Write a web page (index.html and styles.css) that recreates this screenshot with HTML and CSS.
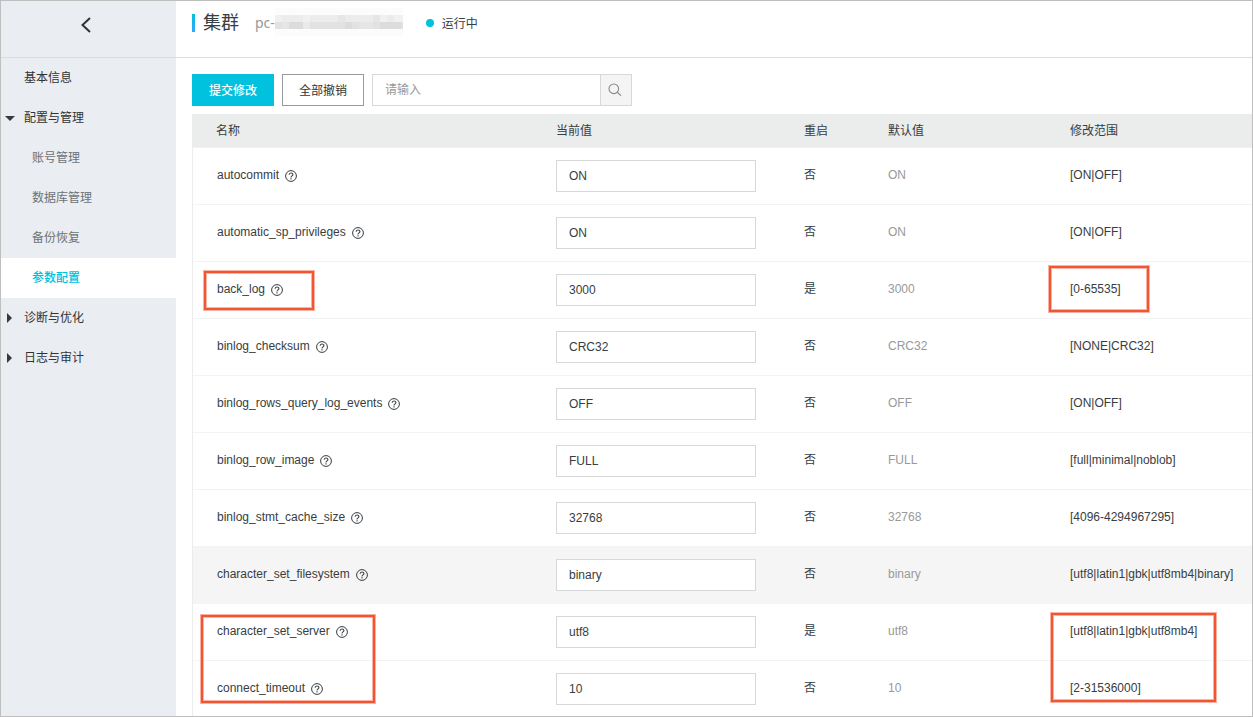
FILE: index.html
```html
<!DOCTYPE html>
<html lang="zh-CN">
<head>
<meta charset="utf-8">
<title>集群 - 参数配置</title>
<link rel="stylesheet" href="styles.css">
</head>
<body>
<svg class="defs" width="0" height="0" aria-hidden="true">
  <symbol id="help" viewBox="0 0 12 12"><circle cx="6" cy="6" r="5.4" fill="none" stroke="currentColor"/><path d="M4.1 4.8C4.1 2.4 7.9 2.4 7.9 4.6C7.9 5.9 6 5.9 6 7.4M6 8.2V9.4" fill="none" stroke="currentColor" stroke-width="1.1"/></symbol>
</svg>
<div class="app">
  <nav class="sidebar">
    <div class="sidebar-head">
      <button class="back" type="button" aria-label="返回"><svg width="12" height="18" viewBox="0 0 12 18"><path d="M10 2L2.5 9L10 16" fill="none" stroke="currentColor" stroke-width="2"/></svg></button>
    </div>
    <a class="item" href="#">基本信息</a>
    <a class="item" href="#"><svg class="arrow" width="10" height="10" viewBox="0 0 10 10"><path d="M0 3H10L5 8Z"/></svg>配置与管理</a>
    <a class="item sub" href="#">账号管理</a>
    <a class="item sub" href="#">数据库管理</a>
    <a class="item sub" href="#">备份恢复</a>
    <a class="item sub active" href="#">参数配置</a>
    <a class="item" href="#"><svg class="arrow" width="10" height="10" viewBox="0 0 10 10"><path d="M2 0L7 5L2 10Z"/></svg>诊断与优化</a>
    <a class="item" href="#"><svg class="arrow" width="10" height="10" viewBox="0 0 10 10"><path d="M2 0L7 5L2 10Z"/></svg>日志与审计</a>
  </nav>
  <main class="main">
    <header class="header">
      <h1 class="title">集群</h1>
      <span class="cluster-id">pc-</span>
      <svg class="mask" width="128" height="28" viewBox="0 0 128 28" shape-rendering="crispEdges" aria-hidden="true">
        <rect width="128" height="28" fill="#fcfcfc"/>
        <rect y="7" width="128" height="7" fill="#ececec"/>
        <rect y="14" width="128" height="7" fill="#e2e2e2"/>
        <g fill="#dcdcdc"><rect x="14" y="14" width="14" height="7"/><rect x="70" y="14" width="7" height="7"/><rect x="105" y="14" width="21" height="7"/></g>
        <g fill="#e6e6e6"><rect x="7" y="14" width="7" height="7"/><rect x="84" y="14" width="14" height="7"/><rect x="63" y="7" width="7" height="7"/><rect x="98" y="7" width="7" height="7"/></g>
        <g fill="#f1f1f1"><rect x="0" y="7" width="7" height="7"/><rect x="28" y="7" width="7" height="7"/><rect x="105" y="7" width="7" height="7"/><rect x="119" y="7" width="9" height="7"/></g>
        <rect x="28" y="14" width="7" height="7" fill="#eaeaea"/>
      </svg>
      <span class="status">运行中</span>
    </header>
    <section class="content">
      <div class="toolbar">
        <button class="btn primary" type="button">提交修改</button>
        <button class="btn" type="button">全部撤销</button>
        <form class="search">
          <input class="search-input" type="text" placeholder="请输入" aria-label="搜索参数">
          <button class="search-btn" type="button" aria-label="搜索"><svg width="14" height="14" viewBox="0 0 14 14"><circle cx="5.8" cy="5.8" r="4.8" fill="none" stroke="currentColor" stroke-width="1.1"/><path d="M9.3 9.3L13 12.6" fill="none" stroke="currentColor" stroke-width="1.2"/></svg></button>
        </form>
      </div>
      <table class="params">
        <colgroup><col class="c-name"><col class="c-value"><col class="c-restart"><col class="c-default"><col></colgroup>
        <thead><tr><th>名称</th><th>当前值</th><th>重启</th><th>默认值</th><th>修改范围</th></tr></thead>
        <tbody>
          <tr><td><label for="p1">autocommit</label><svg class="help"><use href="#help"/></svg></td><td><input id="p1" type="text" value="ON"></td><td>否</td><td>ON</td><td>[ON|OFF]</td></tr>
          <tr><td><label for="p2">automatic_sp_privileges</label><svg class="help"><use href="#help"/></svg></td><td><input id="p2" type="text" value="ON"></td><td>否</td><td>ON</td><td>[ON|OFF]</td></tr>
          <tr><td><label for="p3">back_log</label><svg class="help"><use href="#help"/></svg><span class="mark mark-name"></span></td><td><input id="p3" type="text" value="3000"></td><td>是</td><td>3000</td><td>[0-65535]<span class="mark mark-range"></span></td></tr>
          <tr><td><label for="p4">binlog_checksum</label><svg class="help"><use href="#help"/></svg></td><td><input id="p4" type="text" value="CRC32"></td><td>否</td><td>CRC32</td><td>[NONE|CRC32]</td></tr>
          <tr><td><label for="p5">binlog_rows_query_log_events</label><svg class="help"><use href="#help"/></svg></td><td><input id="p5" type="text" value="OFF"></td><td>否</td><td>OFF</td><td>[ON|OFF]</td></tr>
          <tr><td><label for="p6">binlog_row_image</label><svg class="help"><use href="#help"/></svg></td><td><input id="p6" type="text" value="FULL"></td><td>否</td><td>FULL</td><td>[full|minimal|noblob]</td></tr>
          <tr><td><label for="p7">binlog_stmt_cache_size</label><svg class="help"><use href="#help"/></svg></td><td><input id="p7" type="text" value="32768"></td><td>否</td><td>32768</td><td>[4096-4294967295]</td></tr>
          <tr class="hovered"><td><label for="p8">character_set_filesystem</label><svg class="help"><use href="#help"/></svg></td><td><input id="p8" type="text" value="binary"></td><td>否</td><td>binary</td><td>[utf8|latin1|gbk|utf8mb4|binary]</td></tr>
          <tr><td><label for="p9">character_set_server</label><svg class="help"><use href="#help"/></svg><span class="mark mark-names"></span></td><td><input id="p9" type="text" value="utf8"></td><td>是</td><td>utf8</td><td>[utf8|latin1|gbk|utf8mb4]<span class="mark mark-ranges"></span></td></tr>
          <tr><td><label for="p10">connect_timeout</label><svg class="help"><use href="#help"/></svg></td><td><input id="p10" type="text" value="10"></td><td>否</td><td>10</td><td>[2-31536000]</td></tr>
        </tbody>
      </table>
    </section>
  </main>
</div>
</body>
</html>
```

FILE: styles.css
```css
* { box-sizing: border-box; }
body, button, input {
  font-family: "Liberation Sans", "Noto Sans CJK SC", sans-serif;
  font-size: 12px;
  color: #373d41;
}
body { margin: 0; }
.defs { position: absolute; }
.app {
  display: flex;
  height: 100vh;
  border: 1px solid #bfbfbf;
  overflow: hidden;
  background: #fff;
}

/* Sidebar */
.sidebar { flex: 0 0 175px; background: #eaedf1; }
.sidebar-head {
  display: flex;
  justify-content: center;
  height: 57px;
  padding: 15px 6px 0 0;
  border-bottom: 1px solid #d9dcdc;
}
.back {
  display: flex;
  height: 18px;
  padding: 0;
  border: 0;
  background: none;
  color: #333;
}
.item {
  display: flex;
  align-items: center;
  height: 40px;
  padding: 0 0 4px 23px;
  color: #333;
  text-decoration: none;
}
.arrow { flex: none; margin: 4px 9px 0 -19px; fill: #333a40; }
.sub { padding-left: 31px; color: #6d7277; }
.active { background: #fff; color: #00c1de; font-weight: 500; }

/* Header */
.main { flex: 1; min-width: 0; }
.header {
  display: flex;
  align-items: center;
  height: 57px;
  padding: 0 16px 14px;
  border-bottom: 1px solid #dcdcdc;
}
.title {
  display: flex;
  align-items: center;
  gap: 8px;
  margin: 0 16px 0 0;
  padding-top: 2px;
  font-size: 18px;
  font-weight: 400;
  line-height: 24px;
}
.title::before {
  content: "";
  width: 3px;
  height: 18px;
  background: linear-gradient(#00c1de, #35a7f6);
}
.cluster-id { font-family: "Noto Sans", sans-serif; font-size: 14px; color: #999; }
.mask { margin-right: 23px; }
.status { display: flex; align-items: center; gap: 8px; }
.status::before {
  content: "";
  width: 8px;
  height: 8px;
  margin-top: 2px;
  border-radius: 50%;
  background: #00c1de;
}

/* Toolbar */
.content { padding: 16px 0 0 16px; }
.toolbar { display: flex; gap: 8px; margin-bottom: 8px; }
.btn {
  width: 82px;
  height: 32px;
  padding: 0 0 2px;
  border: 1px solid #999;
  background: #fff;
  color: #333;
}
.primary { border-color: #00c1de; background: #00c1de; color: #fff; font-weight: 500; }
.search { display: flex; width: 260px; }
.search-input {
  flex: 1;
  min-width: 0;
  height: 32px;
  padding: 0 12px;
  border: 1px solid #d7d8d9;
  border-right: 0;
  outline: 0;
}
.search-input::placeholder { color: #999; }
.search-btn {
  display: flex;
  align-items: center;
  justify-content: center;
  width: 32px;
  height: 32px;
  padding: 0 2px 0 0;
  border: 1px solid #d7d8d9;
  background: #f4f4f4;
  color: #888;
}

/* Parameter table */
.params {
  width: 100%;
  table-layout: fixed;
  border-collapse: separate;
  border-spacing: 0;
}
.c-name { width: 340px; }
.c-value { width: 248px; }
.c-restart { width: 84px; }
.c-default { width: 182px; }
th {
  height: 34px;
  padding: 0 0 2px 24px;
  border-bottom: 1px solid #f0f1f1;
  background: #ebecec;
  font-weight: 400;
  text-align: left;
}
td {
  position: relative;
  height: 57px;
  padding: 0 0 2px 24px;
  border-bottom: 1px solid #f2f3f4;
  line-height: 18px;
  white-space: nowrap;
}
td:first-child { border-left: 1px solid #ebecec; }
td:nth-child(2) { padding-bottom: 0; }
td:nth-child(4) { color: #999; }
td input {
  display: block;
  width: 200px;
  height: 32px;
  padding: 0 12px;
  border: 1px solid #d7d8d9;
  background: #fff;
  outline: 0;
}
.hovered td { background: #f5f5f5; }
.help { width: 12px; height: 12px; margin-left: 6px; vertical-align: -3px; }

/* Highlight frames over the table */
.mark {
  position: absolute;
  z-index: 1;
  border: 2px solid #f15533;
  box-shadow: 0 0 0 1px #f9b3a3, inset 0 0 0 1px #f9b3a3;
  pointer-events: none;
}
.mark-name { left: 11px; top: 9px; width: 110px; height: 39px; }
.mark-range { left: 3px; top: 4px; width: 100px; height: 46px; }
.mark-names { left: 8px; top: 11px; width: 174px; height: 88px; }
.mark-ranges { left: 5px; top: 9px; width: 165px; height: 89px; }
```
